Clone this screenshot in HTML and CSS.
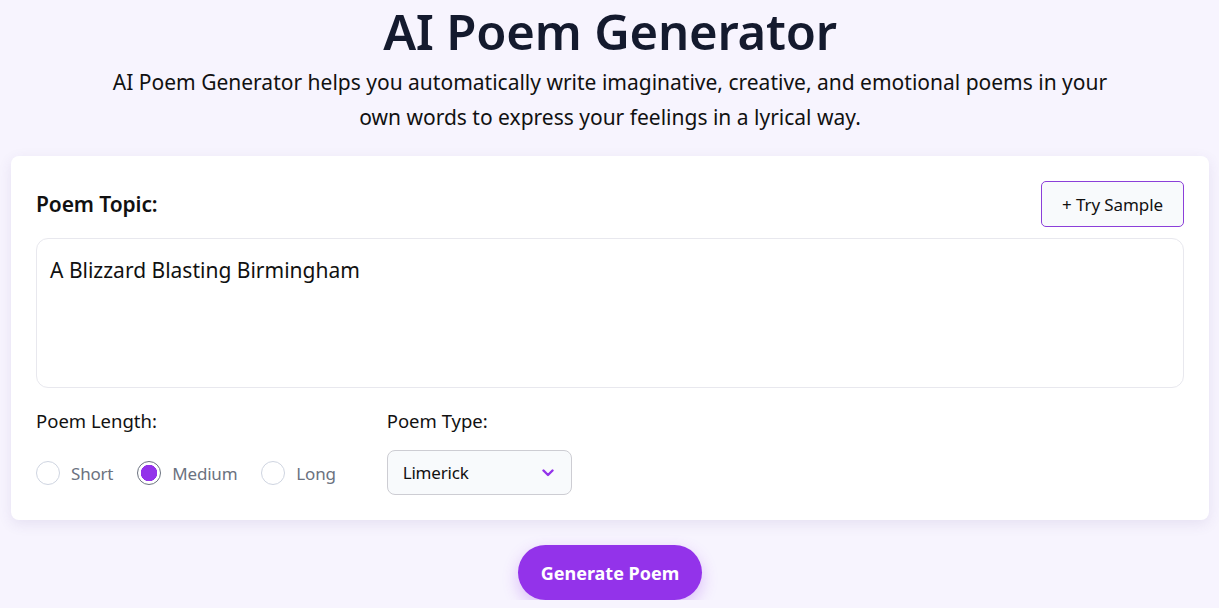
FILE: index.html
```html
<!DOCTYPE html>
<html lang="en">
<head>
<meta charset="utf-8">
<title>AI Poem Generator</title>
<link rel="stylesheet" href="styles.css">
</head>
<body>
<main class="page">
  <header class="hero">
    <h1 class="title">AI Poem Generator</h1>
    <p class="subtitle">AI Poem Generator helps you automatically write imaginative, creative, and emotional poems in your own words to express your feelings in a lyrical way.</p>
  </header>
  <section class="card">
    <div class="topic-head">
      <label class="topic-label" for="topic">Poem Topic:</label>
      <button class="sample-btn" type="button">+ Try Sample</button>
    </div>
    <textarea id="topic" class="topic-input">A Blizzard Blasting Birmingham</textarea>
    <div class="options">
      <div class="opt-group length">
        <div class="opt-label">Poem Length:</div>
        <div class="radios">
          <label class="radio"><span class="dot"></span><span class="radio-text">Short</span></label>
          <label class="radio checked"><span class="dot"></span><span class="radio-text">Medium</span></label>
          <label class="radio"><span class="dot"></span><span class="radio-text">Long</span></label>
        </div>
      </div>
      <div class="opt-group">
        <div class="opt-label">Poem Type:</div>
        <div class="select">
          <span>Limerick</span>
          <svg class="chev" width="12" height="8" viewBox="0 0 12 8" fill="none" stroke="#9333ea" stroke-width="2.4" stroke-linecap="round" stroke-linejoin="round"><path d="M1.5 1.5l4.5 4.5 4.5-4.5"/></svg>
        </div>
      </div>
    </div>
  </section>
  <div class="actions">
    <button class="generate" type="button">Generate Poem</button>
  </div>
</main>
</body>
</html>
```
FILE: styles.css
```css
* { box-sizing: border-box; }
html, body { margin: 0; padding: 0; }
body {
  background: #f7f4fe;
  font-family: "Noto Sans", "Open Sans", Arial, sans-serif;
  color: #111827;
  overflow: hidden;
}
.page {
  padding: 0 10px 0 11px;
  display: flex;
  flex-direction: column;
}
.hero {
  text-align: center;
}
.title {
  margin: 0;
  padding-top: 2px;
  font-size: 49px;
  line-height: 58px;
  font-weight: 600;
  color: #141a2e;
  letter-spacing: -0.2px;
}
.subtitle {
  margin: 5px auto 0;
  max-width: 1010px;
  font-size: 21px;
  line-height: 35px;
  color: #111;
}
.card {
  margin-top: 21px;
  background: #fff;
  border-radius: 8px;
  box-shadow: 0 4px 14px rgba(80, 60, 140, 0.10);
  padding: 25px 25px 25px 25px;
  height: 364px;
}
.topic-head {
  display: flex;
  justify-content: space-between;
  align-items: center;
}
.topic-label {
  font-size: 21px;
  font-weight: 600;
  color: #111;
  letter-spacing: -0.1px;
}
.sample-btn {
  width: 143px;
  height: 46px;
  border: 1px solid #8b3fd9;
  background: #f8fafc;
  border-radius: 5px;
  font-family: inherit;
  font-size: 17px;
  color: #111;
  letter-spacing: -0.1px;
}
.topic-input {
  display: block;
  width: 100%;
  height: 150px;
  margin-top: 11px;
  border: 1px solid #e8e8ee;
  border-radius: 12px;
  padding: 17px 13px;
  font-family: inherit;
  font-size: 21px;
  color: #111;
  resize: none;
  outline: none;
}
.options {
  display: flex;
  gap: 51px;
  margin-top: 20px;
}
.opt-group {
  display: flex;
  flex-direction: column;
}
.opt-label {
  font-size: 18.5px;
  line-height: 26px;
  color: #111;
}
.radios {
  display: flex;
  gap: 24px;
  margin-top: 27px;
  align-items: center;
}
.radio {
  display: flex;
  align-items: center;
  gap: 11px;
}
.dot {
  width: 24px;
  height: 24px;
  border-radius: 50%;
  border: 1px solid #cfd5e1;
  background: #fff;
}
.radio.checked .dot {
  border-color: #6b7280;
  background: radial-gradient(circle, #9333ea 0 8px, #fff 8.5px);
}
.radio-text {
  font-size: 17px;
  color: #6b7280;
  letter-spacing: -0.2px;
}
.select {
  margin-top: 16px;
  width: 185px;
  height: 45px;
  border: 1px solid #cdcdd3;
  border-radius: 8px;
  background: #f8fafc;
  display: flex;
  align-items: center;
  justify-content: space-between;
  padding: 0 17px 0 15px;
  font-size: 17px;
  color: #111;
  letter-spacing: -0.2px;
}
.chev { display: block; }
.actions {
  display: flex;
  justify-content: center;
  margin-top: 25px;
}
.generate {
  width: 184px;
  height: 55px;
  border: none;
  border-radius: 28px;
  background: #9333ea;
  color: #fff;
  font-family: inherit;
  font-size: 18px;
  font-weight: 700;
  box-shadow: 0 6px 16px rgba(147, 51, 234, 0.28);
}
```
